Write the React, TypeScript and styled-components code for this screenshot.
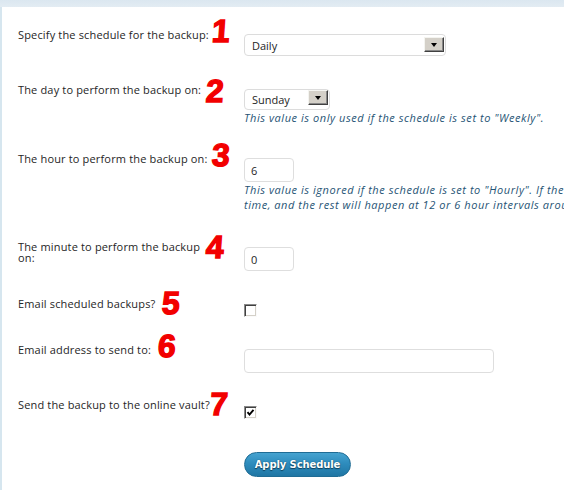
import React from "react";
import styled, { createGlobalStyle } from "styled-components";

const GlobalStyle = createGlobalStyle`
  html, body { margin: 0; padding: 0; background: #fff; overflow: hidden; }
  body { font-family: "Open Sans", "DejaVu Sans", sans-serif; }
  * { box-sizing: border-box; }
`;

const Frame = styled.div`
  width: 564px;
  height: 490px;
  display: flex;
  flex-direction: column;
  overflow: hidden;
`;

const TopBand = styled.div`
  height: 7px;
  flex: none;
  background: linear-gradient(#dbe7f0, #e3ecf3);
`;

const Panel = styled.div`
  flex: 1;
  border-left: 2px solid #d6e6ef;
  background: #fff;
  padding: 22px 0 0 16px;
  display: flex;
  flex-direction: column;
`;

const Row = styled.div<{ $top: number }>`
  display: grid;
  grid-template-columns: 226px 1fr;
  align-items: start;
  margin-top: ${(p) => p.$top}px;
`;

const LabelCell = styled.div`
  display: flex;
  align-items: flex-start;
  font-size: 11px;
  line-height: 11px;
  letter-spacing: 0.16px;
  color: #262626;
`;

const LabelText = styled.span<{ $max?: number }>`
  max-width: ${(p) => (p.$max ? `${p.$max}px` : "none")};
`;

const Num = styled.span<{ $lift: number; $gap: number }>`
  display: inline-block;
  font-family: "Liberation Sans", Arial, sans-serif;
  font-weight: 700;
  font-size: 32px;
  line-height: 1;
  color: #f20000;
  -webkit-text-stroke: 1.4px #f20000;
  transform: skewX(-4deg);
  margin-left: ${(p) => p.$gap}px;
  margin-top: ${(p) => p.$lift}px;
  margin-bottom: -24px;
`;

const ControlCell = styled.div<{ $offset: number }>`
  padding-top: ${(p) => p.$offset}px;
  min-width: 0;
  display: flex;
  flex-direction: column;
  align-items: flex-start;
`;

const SelectBox = styled.div<{ $w: number; $h: number }>`
  width: ${(p) => p.$w}px;
  height: ${(p) => p.$h}px;
  border: 1px solid #dcdcdc;
  border-radius: 4px;
  background: #fff;
  display: flex;
  align-items: flex-start;
  justify-content: space-between;
  padding-left: 7px;
  font-size: 11px;
  color: #1e1e1e;
`;

const SelectValue = styled.span`
  align-self: center;
`;

const ArrowBtn = styled.span<{ $mt: number }>`
  width: 20px;
  height: 15px;
  margin: ${(p) => p.$mt}px 1px 0 0;
  background: #d4d0c8;
  border-top: 1px solid #f4f4f0;
  border-left: 1px solid #f4f4f0;
  border-right: 1px solid #404040;
  border-bottom: 1px solid #404040;
  box-shadow: inset -1px -1px 0 #888;
  display: flex;
  align-items: center;
  justify-content: center;
`;

const Tri = styled.span`
  width: 0;
  height: 0;
  border-left: 3.5px solid transparent;
  border-right: 3.5px solid transparent;
  border-top: 4px solid #000;
`;

const TextInput = styled.div<{ $w: number }>`
  width: ${(p) => p.$w}px;
  height: 24px;
  border: 1px solid #dedede;
  border-radius: 4px;
  background: #fff;
  padding-left: 6px;
  display: flex;
  align-items: center;
  font-size: 11px;
  color: #1e1e1e;
`;

const Hint = styled.p`
  margin: 0;
  font-size: 11px;
  line-height: 15px;
  letter-spacing: 0.55px;
  font-style: italic;
  color: #1f5475;
  white-space: nowrap;
`;

const Check = styled.span`
  width: 13px;
  height: 13px;
  background: #fff;
  border-top: 1px solid #8a8a8a;
  border-left: 1px solid #8a8a8a;
  border-right: 1px solid #fafafa;
  border-bottom: 1px solid #fafafa;
  box-shadow: inset 1px 1px 0 #404040, inset -1px -1px 0 #d4d0c8;
  display: flex;
  align-items: center;
  justify-content: center;
`;

const ApplyButton = styled.button`
  width: 107px;
  height: 25px;
  border-radius: 13px;
  border: 1px solid #1f6c95;
  background: linear-gradient(#46a3d0 0%, #2e8cbd 45%, #1f76a4 100%);
  color: #fff;
  font-family: "DejaVu Sans", sans-serif;
  font-weight: 700;
  font-size: 10px;
  letter-spacing: -0.1px;
  text-shadow: 0 0 1px #0d3f5c, 0 1px 1px #0d3f5c;
  padding: 0;
  cursor: pointer;
`;

const CheckMark = () => (
  <svg width="9" height="9" viewBox="0 0 9 9">
    <polyline points="1.5,4.2 3.5,6.5 7.5,1.8" fill="none" stroke="#000" strokeWidth="1.9" />
  </svg>
);

export default function App() {
  return (
    <>
      <GlobalStyle />
      <Frame>
        <TopBand />
        <Panel>
          <Row $top={0}>
            <LabelCell>
              <LabelText>Specify the schedule for the backup:</LabelText>
              <Num $lift={-14} $gap={3}>1</Num>
            </LabelCell>
            <ControlCell $offset={5}>
              <SelectBox $w={202} $h={22}>
                <SelectValue>Daily</SelectValue>
                <ArrowBtn $mt={2}>
                  <Tri />
                </ArrowBtn>
              </SelectBox>
            </ControlCell>
          </Row>

          <Row $top={28}>
            <LabelCell>
              <LabelText>The day to perform the backup on:</LabelText>
              <Num $lift={-9} $gap={5}>2</Num>
            </LabelCell>
            <ControlCell $offset={5}>
              <SelectBox $w={86} $h={21}>
                <SelectValue>Sunday</SelectValue>
                <ArrowBtn $mt={0}>
                  <Tri />
                </ArrowBtn>
              </SelectBox>
              <Hint>This value is only used if the schedule is set to "Weekly".</Hint>
            </ControlCell>
          </Row>

          <Row $top={28}>
            <LabelCell>
              <LabelText>The hour to perform the backup on:</LabelText>
              <Num $lift={-14} $gap={4}>3</Num>
            </LabelCell>
            <ControlCell $offset={5}>
              <TextInput $w={50}>6</TextInput>
              <Hint>
                This value is ignored if the schedule is set to "Hourly". If the schedule is set to "Twice Daily" or
                "Four Times Daily", this will be the first backup
                <br />
                time, and the rest will happen at 12 or 6 hour intervals around the clock.
              </Hint>
            </ControlCell>
          </Row>

          <Row $top={29}>
            <LabelCell>
              <LabelText $max={186}>The minute to perform the backup on:</LabelText>
              <Num $lift={-10} $gap={2}>4</Num>
            </LabelCell>
            <ControlCell $offset={6}>
              <TextInput $w={50}>0</TextInput>
            </ControlCell>
          </Row>

          <Row $top={27}>
            <LabelCell>
              <LabelText>Email scheduled backups?</LabelText>
              <Num $lift={-11} $gap={7}>5</Num>
            </LabelCell>
            <ControlCell $offset={6}>
              <Check />
            </ControlCell>
          </Row>

          <Row $top={27}>
            <LabelCell>
              <LabelText>Email address to send to:</LabelText>
              <Num $lift={-14} $gap={7}>6</Num>
            </LabelCell>
            <ControlCell $offset={5}>
              <TextInput $w={250} />
            </ControlCell>
          </Row>

          <Row $top={26}>
            <LabelCell>
              <LabelText>Send the backup to the online vault?</LabelText>
              <Num $lift={-11} $gap={0}>7</Num>
            </LabelCell>
            <ControlCell $offset={7}>
              <Check>
                <CheckMark />
              </Check>
            </ControlCell>
          </Row>

          <Row $top={33}>
            <span />
            <ControlCell $offset={0}>
              <ApplyButton>Apply Schedule</ApplyButton>
            </ControlCell>
          </Row>
        </Panel>
      </Frame>
    </>
  );
}
